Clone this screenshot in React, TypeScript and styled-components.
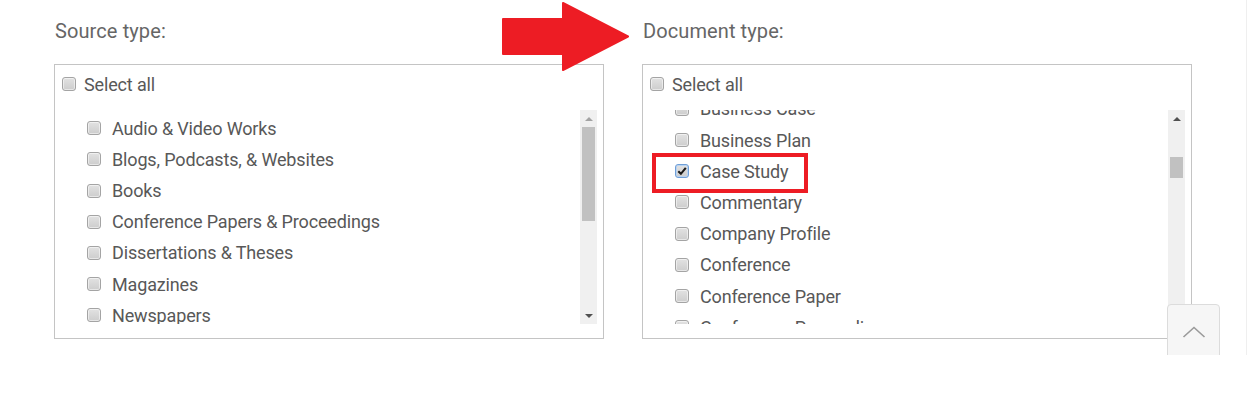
import React, { useLayoutEffect, useRef } from 'react';
import styled, { createGlobalStyle } from 'styled-components';

const ROW = 31.2;
const PAD = 2.6;
const VIEW = 214;
const ARROW = 17;

const sourceTypes = [
  'Audio & Video Works',
  'Blogs, Podcasts, & Websites',
  'Books',
  'Conference Papers & Proceedings',
  'Dissertations & Theses',
  'Magazines',
  'Newspapers',
  'Other Sources',
  'Reports',
  'Scholarly Journals',
  'Trade Journals',
  'Wire Feeds',
  'Working Papers',
];

const documentTypes = [
  'Abstract', 'Advertisement', 'Annual Report', 'Article', 'Bibliography', 'Biography',
  'Book', 'Book Chapter', 'Book Review', 'Business Case', 'Business Plan', 'Case Study',
  'Commentary', 'Company Profile', 'Conference', 'Conference Paper', 'Conference Proceedings',
  'Correction/Retraction', 'Country Report', 'Dissertation/Thesis', 'Editorial', 'Essay',
  'Evidence Based Healthcare', 'Feature', 'Fiction', 'Front Matter', 'Government Document',
  'Industry Report', 'Instructional Material', 'Interview', 'Legal Decision', 'Letter',
  'Literature Review', 'Market Research', 'Marketing Plan', 'Meeting', 'News', 'Obituary',
  'Patent', 'Periodical', 'Poem', 'Policy', 'Product Review', 'Report', 'Review',
  'Speech', 'Statistics', 'Technical Report', 'Transcript', 'Website', 'Working Paper',
  'Blog', 'Editorial Cartoon', 'Image', 'Map', 'Table', 'Video', 'Other',
];

const GlobalStyle = createGlobalStyle`
  body {
    margin: 0;
    background: #fff;
    font-family: Roboto, "Liberation Sans", sans-serif;
  }
`;

// Zona visível da página
const Page = styled.div`
  position: relative;
  box-sizing: border-box;
  width: 1247px;
  height: 355px;
  overflow: hidden;
  border-right: 1px solid #efefef;
  padding: 19px 0 0 54px;
  display: flex;
  gap: 38px;
`;

const Column = styled.section`
  width: 550px;
  display: flex;
  flex-direction: column;
`;

const Label = styled.h3`
  margin: 0 0 21px 1px;
  font-size: 20px;
  line-height: 24px;
  font-weight: 400;
  color: #666;
  letter-spacing: 0.1px;
`;

const FilterBox = styled.div`
  box-sizing: border-box;
  height: 275px;
  border: 1px solid #c4c4c4;
  padding: 6px 6px 0 7px;
  display: flex;
  flex-direction: column;
`;

const SelectAllRow = styled.label`
  height: 26px;
  display: flex;
  align-items: center;
  gap: 8px;
  font-size: 18px;
  color: #585858;
  letter-spacing: -0.15px;
`;

const ListArea = styled.div`
  margin-top: 13px;
  height: ${VIEW}px;
  display: flex;
`;

const Viewport = styled.div`
  flex: 1;
  overflow: hidden;
`;

const ItemList = styled.ul`
  list-style: none;
  margin: 0;
  padding: ${PAD}px 0;
`;

const Item = styled.li<{ $highlight?: boolean }>`
  position: relative;
  height: ${ROW}px;
  padding-left: 25px;
  display: flex;
  align-items: center;
  gap: 11px;
  font-size: 18px;
  color: #585858;
  letter-spacing: -0.15px;
  white-space: nowrap;

  ${(p) =>
    p.$highlight &&
    `
    &::after {
      content: '';
      position: absolute;
      left: 2px;
      top: -2.6px;
      width: 156px;
      height: 40px;
      box-sizing: border-box;
      border: 4px solid #ed1c24;
    }
  `}
`;

const Check = styled.span<{ $checked?: boolean }>`
  box-sizing: border-box;
  flex: none;
  width: 14px;
  height: 14px;
  border-radius: 3px;
  border: 1px solid ${(p) => (p.$checked ? '#6f9fd8' : '#a4a4a4')};
  background: linear-gradient(#e2e2e2, #cdcdcd);
  box-shadow: ${(p) =>
    p.$checked
      ? 'inset 0 0 0 1px #b9d3f0'
      : 'inset 0 0 0 1px rgba(255, 255, 255, 0.5)'};
  display: flex;
  align-items: center;
  justify-content: center;
`;

const Scrollbar = styled.div`
  width: 17px;
  background: #f0f0f0;
  display: flex;
  flex-direction: column;
`;

const ArrowButton = styled.div`
  height: ${ARROW}px;
  display: flex;
  align-items: center;
  justify-content: center;
`;

const Triangle = styled.span<{ $down?: boolean; $disabled?: boolean }>`
  width: 0;
  height: 0;
  border-left: 4px solid transparent;
  border-right: 4px solid transparent;
  ${(p) =>
    p.$down
      ? `border-top: 4px solid ${p.$disabled ? '#a3a3a3' : '#505050'};`
      : `border-bottom: 4px solid ${p.$disabled ? '#a3a3a3' : '#505050'};`}
`;

const ThumbTrack = styled.div`
  flex: 1;
  display: flex;
  flex-direction: column;
`;

const Thumb = styled.div`
  margin-left: 2px;
  margin-right: 2px;
  background: #c1c1c1;
`;

const ArrowAnnotation = styled.svg`
  position: absolute;
  left: 500px;
  top: 0;
`;

const BackToTop = styled.button`
  position: absolute;
  left: 1167px;
  top: 304px;
  width: 53px;
  height: 60px;
  box-sizing: border-box;
  border: 1px solid #dcdcdc;
  border-radius: 4px 4px 0 0;
  background: #f6f6f6;
  padding: 0;
  display: flex;
  justify-content: center;
  padding-top: 21px;
`;

const Checkbox: React.FC<{ checked?: boolean }> = ({ checked }) => (
  <Check $checked={checked}>
    {checked && (
      <svg width="10" height="10" viewBox="0 0 10 10">
        <path d="M1.3 5.2 L3.9 7.8 L8.8 1.8" fill="none" stroke="#1a1a1a" strokeWidth="2.1" />
      </svg>
    )}
  </Check>
);

interface ScrollListProps {
  items: string[];
  scrollTop: number;
  checked?: string;
}

const ScrollList: React.FC<ScrollListProps> = ({ items, scrollTop, checked }) => {
  const ref = useRef<HTMLDivElement>(null);

  useLayoutEffect(() => {
    if (ref.current) ref.current.scrollTop = scrollTop;
  }, [scrollTop]);

  const content = items.length * ROW + PAD * 2;
  const track = VIEW - ARROW * 2;
  const thumbH = Math.max(18, (track * VIEW) / content);
  const thumbTop = (scrollTop / (content - VIEW)) * (track - thumbH);

  return (
    <ListArea>
      <Viewport ref={ref}>
        <ItemList>
          {items.map((name) => (
            <Item key={name} $highlight={name === checked}>
              <Checkbox checked={name === checked} />
              {name}
            </Item>
          ))}
        </ItemList>
      </Viewport>
      <Scrollbar>
        <ArrowButton>
          <Triangle $disabled={scrollTop === 0} />
        </ArrowButton>
        <ThumbTrack>
          <Thumb style={{ marginTop: thumbTop, height: thumbH }} />
        </ThumbTrack>
        <ArrowButton>
          <Triangle $down />
        </ArrowButton>
      </Scrollbar>
    </ListArea>
  );
};

const FilterColumn: React.FC<{ title: string } & ScrollListProps> = ({ title, ...list }) => (
  <Column>
    <Label>{title}</Label>
    <FilterBox>
      <SelectAllRow>
        <Checkbox />
        Select all
      </SelectAllRow>
      <ScrollList {...list} />
    </FilterBox>
  </Column>
);

const App: React.FC = () => {
  return (
    <>
      <GlobalStyle />
      <Page>
        <FilterColumn title="Source type:" items={sourceTypes} scrollTop={0} />
        <FilterColumn
          title="Document type:"
          items={documentTypes}
          scrollTop={300}
          checked="Case Study"
        />
        <ArrowAnnotation width="132" height="74" viewBox="0 0 132 74">
          <path
            d="M3 19 L63 19 L63 3 L128 36.5 L63 70 L63 54 L3 54 Z"
            fill="#ed1c24"
            stroke="#ed1c24"
            strokeWidth="2"
            strokeLinejoin="round"
          />
        </ArrowAnnotation>
        <BackToTop aria-label="Back to top">
          <svg width="24" height="12" viewBox="0 0 24 12">
            <path d="M1.5 11 L12 1.5 L22.5 11" fill="none" stroke="#9a9a9a" strokeWidth="1.6" />
          </svg>
        </BackToTop>
      </Page>
    </>
  );
};

export default App;
